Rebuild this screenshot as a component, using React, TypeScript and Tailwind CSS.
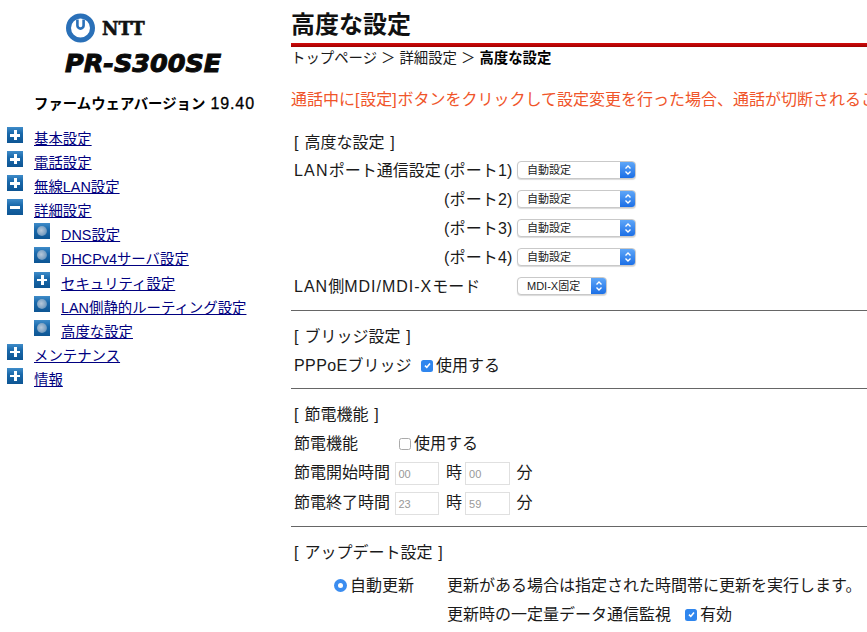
import React from "react";

const FONT = "font-['Liberation_Sans','Noto_Sans_CJK_JP',sans-serif]";

function TreeIcon({ kind }: { kind: "plus" | "minus" | "dot" }) {
  return (
    <span className="relative block w-4 h-4 shrink-0 bg-[linear-gradient(180deg,#3f8cc9_0%,#1a69ab_40%,#0d5593_100%)]">
      {kind === "plus" && (
        <>
          <span className="absolute left-[3px] top-[7px] w-[10px] h-[2.5px] bg-white" />
          <span className="absolute left-[7px] top-[3px] w-[2.5px] h-[10px] bg-white" />
        </>
      )}
      {kind === "minus" && <span className="absolute left-[3px] top-[6.5px] w-[10px] h-[3px] bg-white" />}
      {kind === "dot" && (
        <span className="absolute left-[3px] top-[3px] w-[10px] h-[10px] rounded-full bg-[radial-gradient(circle_at_42%_45%,#b6c8da,#7fa3c4_55%,#3273ab)]" />
      )}
    </span>
  );
}

function NavRow({ kind, label, sub }: { kind: "plus" | "minus" | "dot"; label: string; sub?: boolean }) {
  return (
    <div className={`flex items-start h-[24.1px] gap-[11px] ${sub ? "pl-[34px]" : "pl-[7px]"}`}>
      <span className="mt-[-2px]"><TreeIcon kind={kind} /></span>
      <a className="text-[14.4px] leading-[21px] text-[#000080] underline whitespace-nowrap">{label}</a>
    </div>
  );
}

function Select({ label, w = 119 }: { label: string; w?: number }) {
  return (
    <span
      className="flex h-[18px] mb-[2px] rounded-[4px] border border-[#c9c9c9] bg-white overflow-hidden shadow-[0_1px_1px_rgba(0,0,0,0.15)]"
      style={{ width: w }}
    >
      <span className="flex-1 pl-[9px] text-[11px] leading-[16px] text-[#222] whitespace-nowrap">{label}</span>
      <span className="w-[15px] flex items-center justify-center bg-[linear-gradient(180deg,#5ea6f8,#1c6fe6)]">
        <svg width="8" height="12" viewBox="0 0 8 12" fill="none" stroke="#fff" strokeWidth="1.4">
          <path d="M1.5 4.5 4 2l2.5 2.5M1.5 7.5 4 10l2.5-2.5" />
        </svg>
      </span>
    </span>
  );
}

function Check({ on }: { on?: boolean }) {
  return on ? (
    <span className="flex items-center justify-center w-[12px] h-[12px] rounded-[2.5px] bg-[#2f86ee]">
      <svg width="9" height="9" viewBox="0 0 9 9" fill="none" stroke="#fff" strokeWidth="1.6">
        <path d="M2 4.6 3.8 6.4 7 2.4" />
      </svg>
    </span>
  ) : (
    <span className="block w-[12px] h-[12px] rounded-[2.5px] border border-[#aaa] bg-white" />
  );
}

function Field({ v }: { v: string }) {
  return (
    <span className="block w-[44.5px] h-[23px] border border-[#e0e0e0] bg-white pl-[3px] text-[11px] leading-[23px] text-[#999]">
      {v}
    </span>
  );
}

function Row({ h, className = "", children }: { h: string; className?: string; children: React.ReactNode }) {
  return <div className={`flex items-center pl-[3px] whitespace-nowrap ${h} ${className}`}>{children}</div>;
}

function PortRow({ port }: { port: number }) {
  return (
    <Row h="h-[29px]">
      <span className="w-[150px]" />
      <span className="w-[73px] tracking-[0.15px]">(ポート{port})</span>
      <Select label="自動設定" />
    </Row>
  );
}

function TimeRow({ label, a, b }: { label: string; a: string; b: string }) {
  return (
    <Row h="h-[30px]">
      <span className="w-[100.5px]">{label}</span>
      <Field v={a} />
      <span className="ml-[7px] mr-[3px]">時</span>
      <Field v={b} />
      <span className="ml-[7px]">分</span>
    </Row>
  );
}

export default function App() {
  return (
    <div className={`${FONT} flex w-[867px] h-[632px] overflow-hidden bg-white text-[16px] text-[#1a1a1a]`}>
      <aside className="w-[291px] shrink-0 flex flex-col">
        <div className="flex items-center h-[30px] mt-[13px] pl-[65px] gap-[6px]">
          <svg width="31" height="30" viewBox="0 0 31 30" fill="none">
            <circle cx="15.5" cy="15" r="12" stroke="#2a70b8" strokeWidth="5" />
            <path d="M12.4 6.5v6a3.1 3.1 0 0 0 6.2 0v-6" stroke="#2a70b8" strokeWidth="2.6" />
          </svg>
          <span className="font-['DejaVu_Serif',serif] font-bold text-[18px] text-[#111] [-webkit-text-stroke:0.6px_#111]">NTT</span>
        </div>
        <div className="mt-[6px] pl-[65px] font-['DejaVu_Sans',sans-serif] font-bold italic text-[25.5px] leading-[28px] text-[#0a0a0a] [-webkit-text-stroke:1px_#0a0a0a] whitespace-nowrap">
          PR-S300SE
        </div>
        <div className="mt-[17px] pl-[34px] text-[14.4px] leading-[20px] font-semibold text-black whitespace-nowrap">
          ファームウェアバージョン<span className="ml-[5px] text-[16px] font-normal tracking-[0.9px] [-webkit-text-stroke:0.3px_#000]">19.40</span>
        </div>
        <nav className="mt-[15px] flex flex-col">
          <NavRow kind="plus" label="基本設定" />
          <NavRow kind="plus" label="電話設定" />
          <NavRow kind="plus" label="無線LAN設定" />
          <NavRow kind="minus" label="詳細設定" />
          <NavRow sub kind="dot" label="DNS設定" />
          <NavRow sub kind="dot" label="DHCPv4サーバ設定" />
          <NavRow sub kind="plus" label="セキュリティ設定" />
          <NavRow sub kind="dot" label="LAN側静的ルーティング設定" />
          <NavRow sub kind="dot" label="高度な設定" />
          <NavRow kind="plus" label="メンテナンス" />
          <NavRow kind="plus" label="情報" />
        </nav>
      </aside>

      <main className="flex-1 min-w-0 flex flex-col">
        <h1 className="text-[24px] leading-[30px] font-bold text-[#111] mt-[10px] whitespace-nowrap">高度な設定</h1>
        <div className="h-[4px] mt-[3px] bg-[linear-gradient(180deg,#d40c0c,#a00000)]" />
        <div className="mt-[1px] h-[20px] text-[14.4px] leading-[20px] whitespace-nowrap">
          トップページ ＞ 詳細設定 ＞ <b className="font-bold text-black">高度な設定</b>
        </div>
        <div className="mt-[20px] h-[24px] leading-[24px] text-[#f0552a] whitespace-nowrap">
          通話中に<span className="tracking-[0.8px]">[</span>設定<span className="tracking-[0.8px]">]</span>ボタンをクリックして設定変更を行った場合、通話が切断されることがあります。
        </div>

        <Row h="h-[27px] mt-[17px]"><span className="[word-spacing:1.5px]">[ 高度な設定 ]</span></Row>
        <Row h="h-[29px]">
          <span className="w-[150px]"><span className="tracking-[1.2px]">LAN</span>ポート通信設定</span>
          <span className="w-[73px] tracking-[0.15px]">(ポート1)</span>
          <Select label="自動設定" />
        </Row>
        <PortRow port={2} />
        <PortRow port={3} />
        <PortRow port={4} />
        <Row h="h-[29px]">
          <span className="w-[223px]"><span className="tracking-[1px]">LAN</span>側<span className="tracking-[1px]">MDI/MDI-X</span>モード</span>
          <Select label="MDI-X固定" w={90} />
        </Row>
        <hr className="mt-[9px] border-t border-[#666]" />

        <Row h="h-[29px] mt-[11px]"><span className="[word-spacing:1.5px]">[ ブリッジ設定 ]</span></Row>
        <Row h="h-[29px]">
          <span className="w-[127px]"><span className="tracking-[0.4px]">PPPoE</span>ブリッジ</span>
          <span className="mr-[3px]"><Check on /></span>
          使用する
        </Row>
        <hr className="mt-[8px] border-t border-[#666]" />

        <Row h="h-[29px] mt-[11px]"><span className="[word-spacing:1.5px]">[ 節電機能 ]</span></Row>
        <Row h="h-[29px]">
          <span className="w-[105px]">節電機能</span>
          <span className="mr-[3px]"><Check /></span>
          使用する
        </Row>
        <TimeRow label="節電開始時間" a="00" b="00" />
        <TimeRow label="節電終了時間" a="23" b="59" />
        <hr className="mt-[8px] border-t border-[#666]" />

        <Row h="h-[29px] mt-[11px]"><span className="[word-spacing:1.5px]">[ アップデート設定 ]</span></Row>
        <Row h="h-[29px] mt-[4px]">
          <span className="w-[40px]" />
          <span className="flex items-center justify-center w-[13px] h-[13px] rounded-full bg-[#3b8df0] mr-[3px]">
            <span className="w-[5px] h-[5px] rounded-full bg-white" />
          </span>
          <span className="w-[97px]">自動更新</span>
          <span>更新がある場合は指定された時間帯に更新を実行します。</span>
        </Row>
        <Row h="h-[29px]">
          <span className="w-[153px]" />
          <span className="w-[238px]">更新時の一定量データ通信監視</span>
          <span className="mr-[3px]"><Check on /></span>
          有効
        </Row>
      </main>
    </div>
  );
}
